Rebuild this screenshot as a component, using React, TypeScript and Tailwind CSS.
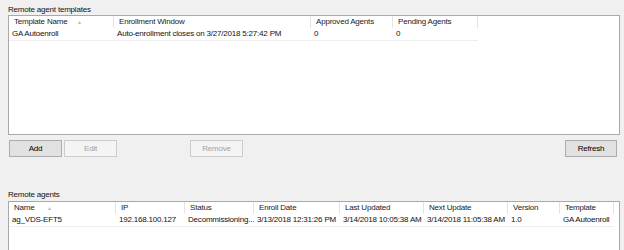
import React from "react";

type Col = { label: string; w: number; sort?: boolean };

const tplCols: Col[] = [
  { label: "Template Name", w: 105, sort: true },
  { label: "Enrollment Window", w: 197 },
  { label: "Approved Agents", w: 82 },
  { label: "Pending Agents", w: 85 },
];
const tplRow = ["GA Autoenroll", "Auto-enrollment closes on 3/27/2018 5:27:42 PM", "0", "0"];

const agentCols: Col[] = [
  { label: "Name", w: 107, sort: true },
  { label: "IP", w: 69 },
  { label: "Status", w: 69 },
  { label: "Enroll Date", w: 86 },
  { label: "Last Updated", w: 84 },
  { label: "Next Update", w: 84 },
  { label: "Version", w: 52 },
  { label: "Template", w: 54 },
];
const agentRow = [
  "ag_VDS-EFT5",
  "192.168.100.127",
  "Decommissioning...",
  "3/13/2018 12:31:26 PM",
  "3/14/2018 10:05:38 AM",
  "3/14/2018 11:05:38 AM",
  "1.0",
  "GA Autoenroll",
];

function Table({ cols, row, h, arrowLeft }: { cols: Col[]; row: string[]; h: string; arrowLeft: string }) {
  return (
    <div className={`border border-[#a9a9a9] bg-white overflow-hidden ${h}`}>
      <div className="flex h-[12px] items-center">
        {cols.map((c, i) => (
          <div
            key={i}
            style={{ width: c.w }}
            className="relative h-full shrink-0 border-r border-[#e3e3e3] pl-[5px] leading-[12px] whitespace-nowrap text-[#222]"
          >
            {c.label}
            {c.sort && (
              <span className={`absolute ${arrowLeft} top-0 text-[5px] text-[#b8b8b8]`}>▲</span>
            )}
          </div>
        ))}
      </div>
      <div className="flex h-[13px] border-b border-[#eeeeee] w-fit">
        {cols.map((c, i) => (
          <div
            key={i}
            style={{ width: c.w }}
            className="shrink-0 pl-[3px] leading-[12px] whitespace-nowrap overflow-hidden"
          >
            {row[i]}
          </div>
        ))}
      </div>
    </div>
  );
}

function Btn({ children, disabled, className = "" }: { children: React.ReactNode; disabled?: boolean; className?: string }) {
  return (
    <div
      className={`h-[17px] flex items-center justify-center border leading-[10px] ${
        disabled ? "border-[#cccccc] bg-[#f4f4f4] text-[#a3a3a3]" : "border-[#adadad] bg-[#e1e1e1] text-black"
      } ${className}`}
    >
      {children}
    </div>
  );
}

export default function App() {
  return (
    <div
      className="w-[624px] h-[250px] overflow-hidden bg-[#f0f0f0] text-[8px] tracking-[-0.2px] text-[#111] pt-[5px] pl-[8px] pr-[4px] flex flex-col"
      style={{ fontFamily: "'Liberation Sans', Arial, sans-serif" }}
    >
      <div className="h-[13px] leading-[10px]">Remote agent templates</div>
      <Table cols={tplCols} row={tplRow} h="h-[120px] shrink-0" arrowLeft="left-[68px]" />
      <div className="flex mt-[5px] shrink-0">
        <Btn className="w-[53px] ml-[1px]">Add</Btn>
        <Btn disabled className="w-[53px] ml-[2px]">Edit</Btn>
        <Btn disabled className="w-[53px] ml-[73px]">Remove</Btn>
        <Btn className="w-[52px] ml-auto mr-[3px]">Refresh</Btn>
      </div>
      <div className="h-[11px] leading-[10px] mt-[33px] shrink-0">Remote agents</div>
      <Table cols={agentCols} row={agentRow} h="h-[80px] shrink-0" arrowLeft="left-[38px]" />
    </div>
  );
}
